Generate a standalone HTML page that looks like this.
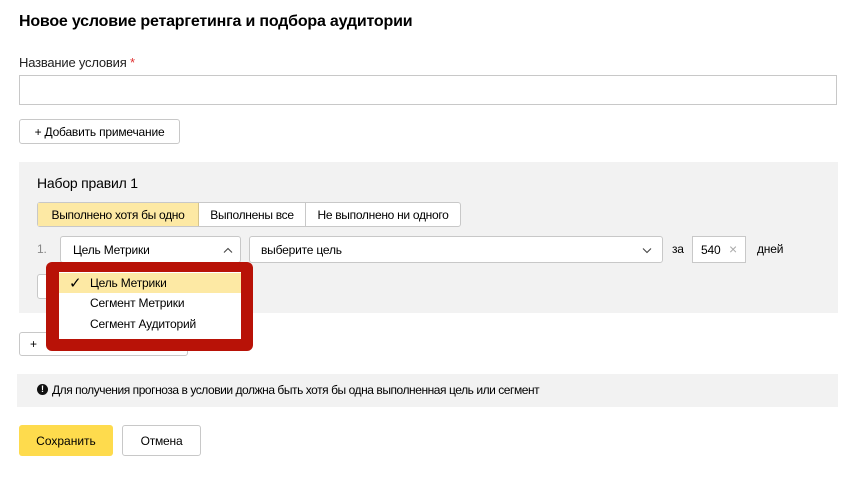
<!DOCTYPE html>
<html><head><meta charset="utf-8"><style>
body{margin:0;width:866px;height:477px;background:#fff;font-family:"Liberation Sans",sans-serif;color:#000;position:relative;overflow:hidden}
.a{position:absolute;box-sizing:border-box}
.btn{border:1px solid #c8c8c8;border-radius:3px;background:#fff;font-size:12px;display:flex;align-items:center;justify-content:center;letter-spacing:-0.2px}
.t{font-size:12px;white-space:nowrap;letter-spacing:-0.2px}
</style></head><body>
<div class="a" style="left:19px;top:13px;font-size:16px;font-weight:bold;letter-spacing:-0.2px">Новое условие ретаргетинга и подбора аудитории</div>
<div class="a t" style="left:19px;top:55px;font-size:13px;color:#222">Название условия <span style="color:#e03030">*</span></div>
<div class="a" style="left:19px;top:75px;width:818px;height:30px;border:1px solid #c8c8c8"></div>
<div class="a btn" style="left:19px;top:119px;width:161px;height:25px">+&nbsp;Добавить примечание</div>
<div class="a" style="left:19px;top:162px;width:819px;height:151px;background:#f2f2f2"></div>
<div class="a" style="left:37px;top:175px;font-size:14px;letter-spacing:-0.2px">Набор правил 1</div>
<div class="a" style="left:37px;top:202px;width:424px;height:25px;border:1px solid #c8c8c8;border-radius:3px;background:#fff;display:flex;font-size:12px;letter-spacing:-0.3px">
<div style="width:160px;background:#fde9a4;display:flex;align-items:center;justify-content:center;border-right:1px solid #d6c48c">Выполнено хотя бы одно</div>
<div style="width:106px;display:flex;align-items:center;justify-content:center;border-right:1px solid #c8c8c8">Выполнены все</div>
<div style="flex:1;display:flex;align-items:center;justify-content:center">Не выполнено ни одного</div></div>
<div class="a t" style="left:37px;top:242px;color:#888">1.</div>
<div class="a" style="left:60px;top:236px;width:181px;height:27px;border:1px solid #c8c8c8;border-radius:3px;background:#fff"><span class="a t" style="left:12px;top:6px">Цель Метрики</span><svg class="a" style="left:162px;top:10px" width="10" height="7"><path d="M1 5.5L5 1.5L9 5.5" fill="none" stroke="#444" stroke-width="1.1"/></svg></div>
<div class="a" style="left:249px;top:236px;width:414px;height:27px;border:1px solid #c8c8c8;border-radius:3px;background:#fff"><span class="a t" style="left:11px;top:6px">выберите цель</span><svg class="a" style="left:392px;top:10px" width="10" height="7"><path d="M1 1.5L5 5.5L9 1.5" fill="none" stroke="#444" stroke-width="1.1"/></svg></div>
<div class="a t" style="left:672px;top:242px">за</div>
<div class="a" style="left:692px;top:236px;width:54px;height:27px;border:1px solid #c8c8c8;background:#fff"><span class="a t" style="left:8px;top:6px">540</span><span class="a" style="left:36px;top:4px;color:#aaa;font-size:14px">×</span></div>
<div class="a t" style="left:757px;top:242px">дней</div>
<div class="a btn" style="left:37px;top:274px;width:60px;height:25px"></div>
<div class="a btn" style="left:19px;top:332px;width:169px;height:24px;justify-content:flex-start;padding-left:10px">+</div>
<div class="a" style="left:46px;top:262px;width:207px;height:89px;background:#b81207;border-radius:6px"></div>
<div class="a" style="left:59px;top:272px;width:182px;height:67px;background:#fff">
<div class="a t" style="left:0;top:1px;width:182px;height:20px;background:#fde9a4"><span class="a" style="left:10px;top:1px;font-size:15px">✓</span><span class="a" style="left:31px;top:3px">Цель Метрики</span></div>
<div class="a t" style="left:31px;top:24px">Сегмент Метрики</div>
<div class="a t" style="left:31px;top:45px">Сегмент Аудиторий</div>
</div>
<div class="a" style="left:17px;top:374px;width:821px;height:33px;background:#f2f2f2"><span class="a" style="left:20px;top:10px;width:11px;height:11px;border-radius:50%;background:#111;color:#fff;font-size:9px;font-weight:bold;text-align:center;line-height:11px">!</span><span class="a t" style="left:35px;top:9px;letter-spacing:-0.45px">Для получения прогноза в условии должна быть хотя бы одна выполненная цель или сегмент</span></div>
<div class="a" style="left:19px;top:425px;width:94px;height:31px;background:#fedb4d;border-radius:3px;font-size:12px;display:flex;align-items:center;justify-content:center">Сохранить</div>
<div class="a btn" style="left:122px;top:425px;width:79px;height:31px">Отмена</div>
</body></html>
